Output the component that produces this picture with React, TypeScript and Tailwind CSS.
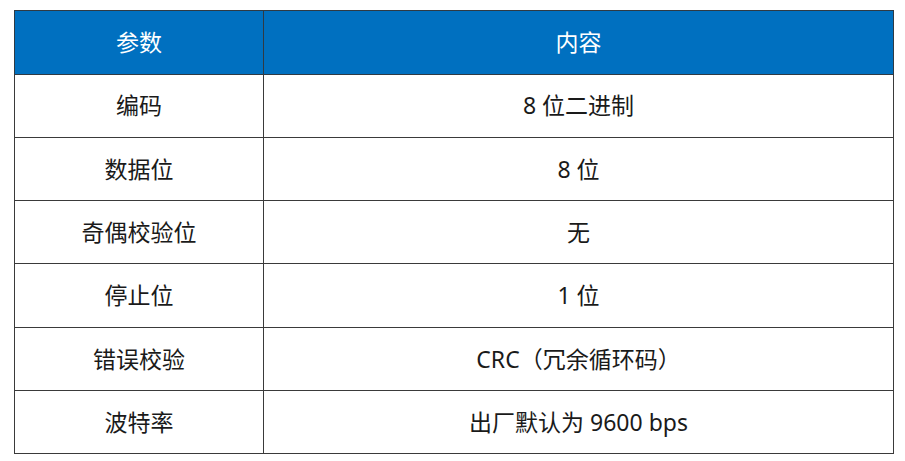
const rows: [string, string][] = [
  ["编码", "8 位二进制"],
  ["数据位", "8 位"],
  ["奇偶校验位", "无"],
  ["停止位", "1 位"],
  ["错误校验", "CRC（冗余循环码）"],
  ["波特率", "出厂默认为 9600 bps"],
];

export default function App() {
  return (
    <div
      className="w-[905px] h-[461px] bg-white pt-[10px] pl-[14px]"
      style={{ fontFamily: '"Noto Sans", "Noto Sans CJK SC", sans-serif' }}
    >
      <table className="border-collapse w-[880px] text-[23px] text-[#1a1a1a]">
        <thead>
          <tr className="h-[63.5px] bg-[#0070c0] text-white">
            <th className="w-[249px] border border-[#2f3a44] font-normal">参数</th>
            <th className="border border-[#2f3a44] font-normal">内容</th>
          </tr>
        </thead>
        <tbody>
          {rows.map(([k, v]) => (
            <tr key={k} className="h-[63.3px]">
              <td className="border border-[#3a3a3a] text-center">{k}</td>
              <td className="border border-[#3a3a3a] text-center">{v}</td>
            </tr>
          ))}
        </tbody>
      </table>
    </div>
  );
}
